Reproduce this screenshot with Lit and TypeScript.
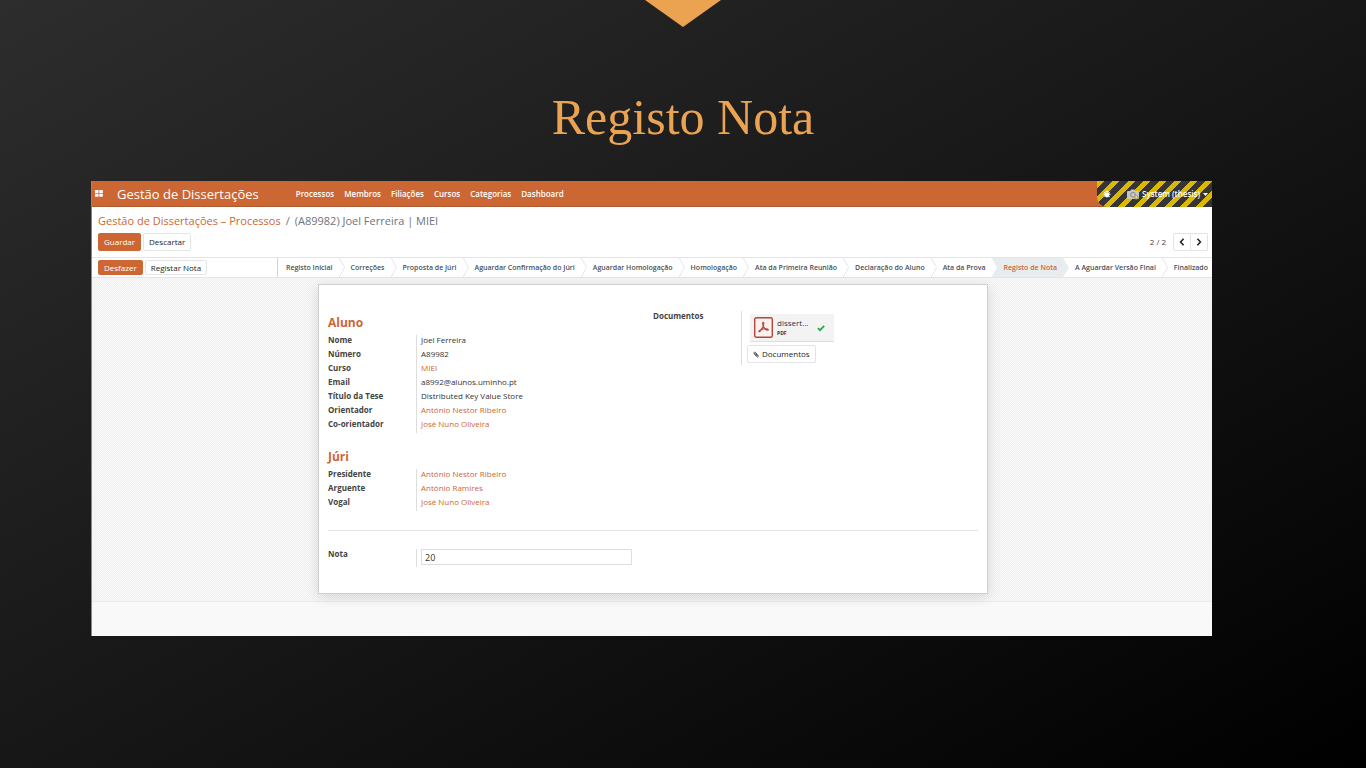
import { LitElement, html, css, svg } from "lit";
import { customElement } from "lit/decorators.js";
import { classMap } from "lit/directives/class-map.js";

const MENU = ["Processos", "Membros", "Filiações", "Cursos", "Categorias", "Dashboard"];

const STAGES = [
  "Registo Inicial", "Correções", "Proposta de Júri", "Aguardar Confirmação do Júri",
  "Aguardar Homologação", "Homologação", "Ata da Primeira Reunião", "Declaração do Aluno",
  "Ata da Prova", "Registo de Nota", "A Aguardar Versão Final", "Finalizado",
];
const CURRENT_STAGE = "Registo de Nota";

interface Field { label: string; value: string; link?: boolean; }

const STUDENT: Field[] = [
  { label: "Nome", value: "Joel Ferreira" },
  { label: "Número", value: "A89982" },
  { label: "Curso", value: "MIEI", link: true },
  { label: "Email", value: "a8992@alunos.uminho.pt" },
  { label: "Título da Tese", value: "Distributed Key Value Store" },
  { label: "Orientador", value: "António Nestor Ribeiro", link: true },
  { label: "Co-orientador", value: "José Nuno Oliveira", link: true },
];

const JURY: Field[] = [
  { label: "Presidente", value: "António Nestor Ribeiro", link: true },
  { label: "Arguente", value: "António Ramires", link: true },
  { label: "Vogal", value: "José Nuno Oliveira", link: true },
];

const reset = css`
  * { box-sizing: border-box; margin: 0; padding: 0; }
  :host { box-sizing: border-box; }
  a { color: inherit; text-decoration: none; }
  ul { list-style: none; }
  svg { display: block; flex: none; }
  button { font: inherit; color: inherit; border: 0; background: none; white-space: nowrap; }
`;

const buttons = css`
  .btn {
    display: flex; align-items: center; justify-content: center; gap: 3px;
    height: 18px; padding: 0 5px;
    border: 1px solid #e3e4e6; border-radius: 2px;
    background: #fff; color: #212529;
    font-size: 8px; font-weight: 500; line-height: 12px;
  }
  .btn.primary { background: #cc6633; border-color: #cc6633; color: #fff; }
  .btn.small { height: 15px; }
`;

@customElement("thesis-navbar")
class ThesisNavbar extends LitElement {
  static styles = [reset, css`
    :host { display: block; }
    .bar {
      display: flex; align-items: stretch; height: 26px; padding-left: 3px;
      background: #cc6633; border-bottom: 1px solid #a85a33; color: #fff;
      font-size: 8px; font-weight: 600; line-height: 12px;
    }
    .apps { display: flex; align-items: center; width: 22px; }
    .brand { display: flex; align-items: center; font-size: 13px; font-weight: 400; line-height: 18px; }
    .menu { display: flex; align-items: center; gap: 10px; margin-left: 37px; }
    .tray {
      display: flex; align-items: center; height: 26px; margin-left: auto; padding: 0 4px 0 6px;
      border-bottom-left-radius: 10px;
      background: repeating-linear-gradient(135deg, #d9b904 0 5px, #373435 5px 11px);
    }
    .user { display: flex; align-items: center; gap: 3px; margin-left: 16px; }
  `];

  render() {
    return html`
      <nav class="bar">
        <button class="apps" aria-label="Aplicações">
          <svg width="8" height="7" viewBox="0 0 8 7" fill="#fff">
            <rect width="3.5" height="3"/><rect x="4.3" width="3.5" height="3"/>
            <rect y="3.7" width="3.5" height="3"/><rect x="4.3" y="3.7" width="3.5" height="3"/>
          </svg>
        </button>
        <a class="brand" href="#">Gestão de Dissertações</a>
        <ul class="menu">${MENU.map(m => html`<li><a href="#">${m}</a></li>`)}</ul>
        <div class="tray">
          <button aria-label="Depuração">
            <svg width="8" height="8" viewBox="0 0 8 8" fill="#fff">
              <path d="M2.4 2a1.6 1.6 0 0 1 3.2 0zM1.6 2.5h4.8v2.6a2.4 2.4 0 0 1-4.8 0z"/>
              <path d="M.9 1.8 2 3M7.1 1.8 6 3M.3 4.4h7.4M1 7.2 2.2 6M7 7.2 5.8 6" stroke="#fff" stroke-width=".7"/>
            </svg>
          </button>
          <button class="user">
            <svg width="12" height="11" viewBox="0 0 12 11">
              <path d="M1 2h2.2L4 .6h3.6L8.4 2H11a1 1 0 0 1 1 1v6a1 1 0 0 1-1 1H1a1 1 0 0 1-1-1V3a1 1 0 0 1 1-1z" fill="#c6c6c4"/>
              <circle cx="6" cy="5.8" r="2.4" fill="none" stroke="#8a8a86" stroke-width="1"/>
              <circle cx="9.4" cy="8.2" r="2.2" fill="#b9a94c"/><path d="M8.2 8.2h2.4M9.4 7v2.4" stroke="#ddd" stroke-width=".8"/>
            </svg>
            System (thesis)
            <svg width="5" height="3" viewBox="0 0 5 3"><path d="M0 0h5L2.5 3z" fill="#fff"/></svg>
          </button>
        </div>
      </nav>`;
  }
}

@customElement("thesis-control-panel")
class ThesisControlPanel extends LitElement {
  static styles = [reset, buttons, css`
    :host { display: block; padding: 6px 4px 6px 6px; border-bottom: 1px solid #e3e4e6; background: #fff; }
    .crumbs { display: flex; gap: 5px; font-size: 11px; line-height: 16px; color: #6c757d; }
    .crumbs a { color: #cc6633; }
    .row { display: flex; align-items: center; gap: 2px; margin-top: 4px; }
    .pager { display: flex; align-items: center; margin-left: auto; color: #444; font-size: 8px; line-height: 12px; }
    .count { margin-right: 7px; }
    .step { width: 18px; padding: 0; }
    .prev { border-radius: 2px 0 0 2px; }
    .next { width: 17px; border-left: 0; border-radius: 0 2px 2px 0; }
  `];

  render() {
    return html`
      <div class="crumbs">
        <a href="#">Gestão de Dissertações – Processos</a><span>/</span><span>(A89982) Joel Ferreira | MIEI</span>
      </div>
      <div class="row">
        <button class="btn primary">Guardar</button>
        <button class="btn">Descartar</button>
        <div class="pager">
          <span class="count">2 / 2</span>
          <button class="btn step prev" aria-label="Anterior">
            <svg width="6" height="8" viewBox="0 0 6 8"><path d="M4.6.8 1.6 4l3 3.2" fill="none" stroke="#212529" stroke-width="1.6"/></svg>
          </button>
          <button class="btn step next" aria-label="Seguinte">
            <svg width="6" height="8" viewBox="0 0 6 8"><path d="M1.4.8l3 3.2-3 3.2" fill="none" stroke="#212529" stroke-width="1.6"/></svg>
          </button>
        </div>
      </div>`;
  }
}

@customElement("thesis-statusbar")
class ThesisStatusbar extends LitElement {
  static styles = [reset, buttons, css`
    :host { display: flex; align-items: stretch; height: 20px; border-bottom: 1px solid #e3e4e6; background: #fff; }
    .actions { display: flex; align-items: center; gap: 2px; padding-left: 6px; }
    .stages { display: flex; margin-left: auto; padding-right: 4px; border-left: 1px solid #ced4da; }
    .stage { display: flex; align-items: stretch; margin-left: -6px; }
    .stage:first-child { margin-left: 0; }
    .name { padding: 0 6px 0 12px; color: #495057; font-size: 7px; font-weight: 600; line-height: 19px; }
    .stage:first-child .name { padding-left: 8px; }
    .stage:last-child .name { padding-right: 0; }
    .current { background: #e9ecef; clip-path: polygon(0 0, calc(100% - 6px) 0, 100% 50%, calc(100% - 6px) 100%, 0 100%, 6px 50%); }
    .current .name { color: #cc6633; }
  `];

  render() {
    return html`
      <div class="actions">
        <button class="btn primary small">Desfazer</button>
        <button class="btn small">Registar Nota</button>
      </div>
      <ul class="stages">
        ${STAGES.map((s, i) => html`
          <li class=${classMap({ stage: true, current: s === CURRENT_STAGE })}>
            <button class="name">${s}</button>
            ${i < STAGES.length - 1 ? html`
              <svg width="6" height="19" viewBox="0 0 6 19">
                ${s === CURRENT_STAGE ? "" : svg`<path d="M.3 0 5.5 9.5.3 19" fill="none" stroke="#dcdfe2" stroke-width=".8"/>`}
              </svg>` : ""}
          </li>`)}
      </ul>`;
  }
}

@customElement("thesis-form")
class ThesisForm extends LitElement {
  static styles = [reset, buttons, css`
    :host {
      display: block; padding: 6px 16px 7px 18px;
      border-bottom: 1px solid #ececec;
      background: repeating-conic-gradient(#efefef 0 25%, #fafafa 0 50%) 0 0 / 2px 2px;
      color: #333; font-size: 8px; line-height: 10px;
    }
    .sheet {
      max-width: 670px; margin: 0 auto; padding: 26px 9px;
      border: 1px solid #cfcfd4; background: #fff;
      box-shadow: 0 3px 12px rgba(0, 0, 0, .13);
    }
    .columns { display: grid; grid-template-columns: 1fr 1fr; align-items: start; }
    .column { padding-right: 21px; }
    .column.last { padding-right: 0; }
    h2 { color: #cc6633; font-size: 12px; font-weight: 700; line-height: 24px; }
    .fields + h2 { margin-top: 12px; }
    .fields { display: grid; grid-template-columns: 88px 1fr; }
    .label { padding-bottom: 4px; font-weight: 700; color: #444; }
    .value { padding: 0 0 4px 4px; border-left: 1px solid #ddd; }
    .value.edit { padding-bottom: 2px; }
    .value a { color: #cc6633; font-weight: 500; }
    hr { margin: 19px 0 18px; border: 0; border-top: 1px solid #e2e4e6; }
    .grade {
      display: block; width: 100%; height: 16px; padding: 0 3px;
      border: 1px solid #dedede; border-radius: 0; background: #fff; color: #333;
      font: inherit; font-size: 9px; outline: none;
    }
    .docs { display: flex; flex-direction: column; align-items: flex-start; gap: 3px; padding: 3px 0 2px 5px; border-left: 1px solid #ddd; }
    .file {
      display: flex; align-items: center; gap: 4px; width: 84px; height: 28px; margin-left: 3px; padding: 0 9px 0 4px;
      border-bottom: 1px solid #ddd; background: #f3f3f3;
    }
    .about { display: flex; flex-direction: column; flex: 1; }
    .type { font-size: 5px; font-weight: 700; color: #333; }
  `];

  private fields(list: Field[]) {
    return html`<dl class="fields">${list.map(f => html`
      <dt class="label">${f.label}</dt>
      <dd class="value">${f.link ? html`<a href="#">${f.value}</a>` : f.value}</dd>`)}</dl>`;
  }

  render() {
    return html`
      <section class="sheet">
        <div class="columns">
          <div class="column">
            <h2>Aluno</h2>
            ${this.fields(STUDENT)}
            <h2>Júri</h2>
            ${this.fields(JURY)}
          </div>
          <div class="column last">
            <div class="fields">
              <span class="label">Documentos</span>
              <div class="docs">
                <div class="file">
                  <svg width="19" height="21" viewBox="0 0 19 21">
                    <rect x=".7" y=".7" width="17.6" height="19.6" rx="1.6" fill="#fbf1ef" stroke="#b5453c" stroke-width="1.4"/>
                    <path d="M9.2 5.400c-.9 0-.7 2 .3 4.100 1.100 2.200 2.900 3.800 4.300 3.700 1.100-.2.600-1.300-1.400-1.400-2.800-.1-6.200.9-7.300 2-.8.900.2 1.500 1.200.4 1.300-1.500 3.200-5.300 3.500-7.300.1-.9-.1-1.500-.6-1.500z" fill="none" stroke="#b5453c" stroke-width="1.100"/>
                  </svg>
                  <div class="about"><a href="#">dissert…</a><span class="type">PDF</span></div>
                  <svg width="8" height="8" viewBox="0 0 8 8"><path d="M.9 4.100 3 6.200 7.200 1.900" fill="none" stroke="#28a745" stroke-width="1.700"/></svg>
                </div>
                <button class="btn">
                  <svg width="6" height="7" viewBox="0 0 6 7"><path d="M1 2.600 3.800 5.700a.9.900 0 0 0 1.400-1.200L2.300 1.200a.8.800 0 0 0-1.200 1L3.600 5M2.600 2.400l1.900 2.200" fill="none" stroke="#333" stroke-width=".8"/></svg>
                  Documentos
                </button>
              </div>
            </div>
          </div>
        </div>
        <hr>
        <div class="columns">
          <div class="column">
            <div class="fields">
              <label class="label" for="grade">Nota</label>
              <div class="value edit"><input class="grade" id="grade" type="text" value="20"></div>
            </div>
          </div>
        </div>
      </section>`;
  }
}

@customElement("app-root")
class AppRoot extends LitElement {
  static styles = css`
    :host {
      display: block; min-height: 100vh;
      background: linear-gradient(to bottom right, #2d2d2d, #171717 50%, #000);
      font-family: "Open Sans", "Noto Sans", sans-serif;
    }
    .marker { display: block; margin: 0 auto; }
    .slide { display: block; padding: 0 154px 0 91px; }
    .title {
      margin: 0; padding: 62px 0 36px; color: #eba352; text-align: center;
      font: 400 50px/56px "Liberation Serif", serif;
    }
    .window { border-left: 1px solid #8a8a8a; background: #f9f9f9; padding-bottom: 34px; }
  `;

  render() {
    return html`
      <svg class="marker" width="76" height="27" viewBox="0 0 76 27"><path d="M0 0h76L38 27z" fill="#eba352"/></svg>
      <h1 class="title">Registo Nota</h1>
      <main class="slide">
        <div class="window">
          <thesis-navbar></thesis-navbar>
          <thesis-control-panel></thesis-control-panel>
          <thesis-statusbar></thesis-statusbar>
          <thesis-form></thesis-form>
        </div>
      </main>`;
  }
}
